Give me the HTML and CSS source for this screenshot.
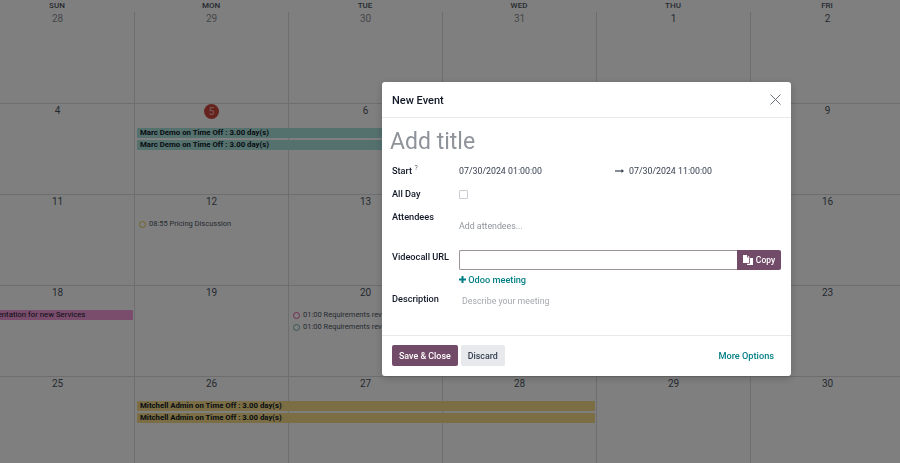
FILE: index.html
```html
<!DOCTYPE html>
<html lang="en">
<head>
<meta charset="UTF-8" />
<title>New Event</title>
<link rel="stylesheet" href="styles.css">
</head>
<body>
  <div class="calendar">
    <div class="week-head">
      <div>SUN</div><div>MON</div><div>TUE</div><div>WED</div><div>THU</div><div>FRI</div>
    </div>

    <div class="week first">
      <div class="day muted">28</div><div class="day muted">29</div><div class="day muted">30</div><div class="day muted">31</div><div class="day">1</div><div class="day">2</div>
    </div>

    <div class="week">
      <div class="day">4</div><div class="day"><span class="today">5</span></div><div class="day">6</div><div class="day">7</div><div class="day">8</div><div class="day">9</div>
      <div class="bar teal row-a span-mon-wed">Marc Demo on Time Off : 3.00 day(s)</div>
      <div class="bar teal row-b span-mon-wed">Marc Demo on Time Off : 3.00 day(s)</div>
    </div>

    <div class="week">
      <div class="day">11</div><div class="day">12</div><div class="day">13</div><div class="day">14</div><div class="day">15</div><div class="day">16</div>
      <div class="timed row-a col-mon"><i class="dot yellow"></i>08:55 Pricing Discussion</div>
    </div>

    <div class="week">
      <div class="day">18</div><div class="day">19</div><div class="day">20</div><div class="day">21</div><div class="day">22</div><div class="day">23</div>
      <div class="bar pink row-a col-sun"><span class="clipped">Presentation for new Services</span></div>
      <div class="timed row-a col-tue"><i class="dot pink-dot"></i>01:00 Requirements review</div>
      <div class="timed row-b col-tue"><i class="dot teal-dot"></i>01:00 Requirements review</div>
    </div>

    <div class="week">
      <div class="day">25</div><div class="day">26</div><div class="day">27</div><div class="day">28</div><div class="day">29</div><div class="day">30</div>
      <div class="bar yellow-bar row-a span-mon-wed">Mitchell Admin on Time Off : 3.00 day(s)</div>
      <div class="bar yellow-bar row-b span-mon-wed">Mitchell Admin on Time Off : 3.00 day(s)</div>
    </div>
  </div>

  <div class="backdrop"></div>

  <div class="modal">
    <header class="modal-header">
      <h4>New Event</h4>
      <svg class="close" width="11" height="11" viewBox="0 0 11 11"><path d="M.5 .5l10 10M10.500 .5l-10 10" stroke="#6b6f76" stroke-width="1" fill="none"/></svg>
    </header>

    <div class="modal-body">
      <div class="title">Add title</div>

      <div class="field start-row">
        <label>Start <sup>?</sup></label>
        <div class="dates">
          <span class="date">07/30/2024 01:00:00</span>
          <svg class="arrow" width="9" height="6" viewBox="0 0 9 6"><path d="M0 3h7.500" stroke="#374151" stroke-width="1.200"/><path d="M6.500 1l2.500 2-2.500 2z" fill="#374151"/></svg>
          <span>07/30/2024 11:00:00</span>
        </div>
      </div>

      <div class="field allday-row">
        <label>All Day</label>
        <span class="checkbox"></span>
      </div>

      <div class="field attendees-row">
        <label>Attendees</label>
        <span class="placeholder">Add attendees...</span>
      </div>

      <div class="field video-row">
        <label>Videocall URL</label>
        <div class="url-group">
          <div class="url-input"></div>
          <button class="copy">
            <svg width="10" height="10" viewBox="0 0 10 10"><path d="M0 0h4v2.500h2V8H0z" fill="#fff"/><path d="M4.800 .4L7 2.400H4.800z" fill="#fff"/><path d="M6.800 3H10v7H4V8.800h2.800z" fill="#fff"/></svg>
            Copy
          </button>
        </div>
      </div>

      <div class="field meeting-row">
        <span></span>
        <a class="link"><svg width="7" height="7" viewBox="0 0 7 7"><path d="M3.500 0v7M0 3.500h7" stroke="#017e84" stroke-width="2"/></svg> Odoo meeting</a>
      </div>

      <div class="field desc-row">
        <label>Description</label>
        <span class="placeholder desc">Describe your meeting</span>
      </div>
    </div>

    <footer class="modal-footer">
      <button class="btn primary">Save &amp; Close</button>
      <button class="btn secondary">Discard</button>
      <a class="link more">More Options</a>
    </footer>
  </div>
</body>
</html>
```

FILE: styles.css
```css
* {
  box-sizing: border-box;
}

html, body {
  height: 100%;
}

body {
  margin: 0;
  overflow: hidden;
  background: #fff;
  color: #374151;
  font-family: Roboto, "Noto Sans", sans-serif;
  font-size: 8.800px;
}

/* Calendar behind the dialog */
.calendar {
  width: 924px;
  margin-left: -20px;
}

.week-head,
.week {
  display: grid;
  grid-template-columns: repeat(6, 154px);
}

.week-head {
  height: 12px;
  font-size: 8px;
  font-weight: 500;
  line-height: 12px;
  text-align: center;
  color: #4b5563;
}

.week {
  grid-template-rows: 24px 12px 12px 1fr;
  height: 91px;
  border-bottom: 1px solid #dcdcdc;
}

.week.first {
  height: 92px;
}

.day {
  grid-row: 1 / -1;
  border-left: 1px solid #dcdcdc;
  font-size: 10px;
  line-height: 14px;
  text-align: center;
  color: #4b5563;
}

.week .day:nth-child(1) { grid-column: 1; }
.week .day:nth-child(2) { grid-column: 2; }
.week .day:nth-child(3) { grid-column: 3; }
.week .day:nth-child(4) { grid-column: 4; }
.week .day:nth-child(5) { grid-column: 5; }
.week .day:nth-child(6) { grid-column: 6; }

.day.muted {
  color: #8b8f96;
}

.today {
  display: inline-block;
  width: 15px;
  height: 15px;
  border-radius: 50%;
  background: #cc463d;
  color: #f0b9b5;
  line-height: 15px;
}

.bar {
  overflow: hidden;
  height: 10px;
  margin: 0 2px 0 3px;
  padding-left: 3px;
  border-radius: 1px;
  color: #111827;
  font-size: 7.800px;
  font-weight: 700;
  line-height: 10px;
  white-space: nowrap;
}

.row-a { grid-row: 2; }
.row-b { grid-row: 3; }
.col-sun { grid-column: 1; }
.col-mon { grid-column: 2; }
.col-tue { grid-column: 3; }
.span-mon-wed { grid-column: 2 / 5; margin-right: 1px; }

.teal { background: #a9e2dd; }
.yellow-bar { background: #f6dc88; }

.pink {
  margin-left: 0;
  margin-right: 1px;
  padding-left: 0;
  background: #f59ad8;
  font-weight: 400;
}

.clipped {
  margin-left: 2px;
}

.timed {
  overflow: hidden;
  display: flex;
  align-items: center;
  gap: 3px;
  margin: -1px 1px 1px 5px;
  font-size: 7.500px;
  line-height: 12px;
  white-space: nowrap;
  color: #4b5563;
}

.dot {
  flex: none;
  width: 7px;
  height: 7px;
  border: 1px solid #999;
  border-radius: 50%;
}

.yellow { border-color: #e6c84a; }
.pink-dot { border-color: #e0569f; }
.teal-dot { border-color: #66b0ae; }

.backdrop {
  position: fixed;
  inset: 0;
  background: rgba(0, 0, 0, 0.5);
}

/* Dialog */
.modal {
  position: fixed;
  left: 382px;
  top: 82px;
  display: flex;
  flex-direction: column;
  width: 409px;
  height: 294px;
  border-radius: 3px;
  background: #fff;
  box-shadow: 0 2px 8px rgba(0, 0, 0, 0.2);
}

.modal-header {
  display: flex;
  align-items: center;
  justify-content: space-between;
  flex: none;
  height: 36px;
  padding: 0 10px;
  border-bottom: 1px solid #e7e9ed;
}

.modal-header h4 {
  margin: 0;
  padding-top: 1px;
  color: #111827;
  font-size: 11px;
  font-weight: 500;
}

.modal-body {
  flex: 1;
  padding: 0 10px;
}

.title {
  height: 46px;
  margin-left: -2px;
  padding-top: 9px;
  color: #8f939a;
  font-size: 23px;
  line-height: 30px;
}

.field {
  display: grid;
  grid-template-columns: 67px 1fr;
}

.field label {
  color: #111827;
  font-size: 9.200px;
  font-weight: 500;
  line-height: 14px;
}

.field sup {
  font-size: 7px;
  font-weight: 400;
  line-height: 0;
  color: #5f636a;
}

.dates {
  display: flex;
  align-items: center;
  height: 14px;
  line-height: 14px;
}

.date {
  width: 156px;
}

.arrow {
  margin-right: 5px;
}

.start-row { height: 23px; }
.allday-row { height: 23px; }
.attendees-row { height: 40px; }
.video-row { height: 23px; }
.meeting-row { height: 19px; }

.checkbox {
  width: 9px;
  height: 9px;
  margin-top: 3px;
  border: 1px solid #c9ccd2;
  border-radius: 1px;
}

.placeholder {
  color: #8f939a;
  line-height: 14px;
}

.attendees-row .placeholder {
  padding-top: 9px;
}

.desc {
  padding: 1px 0 0 3px;
  color: #a5a8ae;
  line-height: 16px;
}

.url-group {
  display: flex;
  height: 20px;
  width: 322px;
}

.url-input {
  flex: 1;
  border: 1px solid #9a949a;
  border-right: 0;
  border-radius: 2px 0 0 2px;
}

.copy {
  display: flex;
  align-items: center;
  justify-content: center;
  gap: 3px;
  width: 44px;
  padding: 0;
  border: 0;
  border-radius: 0 2px 2px 0;
  background: #714b67;
  color: #fff;
  font: 500 8.500px Roboto, sans-serif;
}

.link {
  color: #017e84;
  font-size: 9.200px;
  font-weight: 500;
}

.meeting-row .link {
  line-height: 14px;
}

.modal-footer {
  display: flex;
  align-items: center;
  gap: 3px;
  flex: none;
  height: 41px;
  padding: 0 17px 1px 10px;
  border-top: 1px solid #e7e9ed;
}

.btn {
  height: 21px;
  padding: 0 7px;
  border: 0;
  border-radius: 2px;
  font: 500 8.900px Roboto, sans-serif;
}

.primary {
  background: #714b67;
  color: #fff;
}

.secondary {
  background: #e7e9ed;
  color: #374151;
}

.more {
  margin-left: auto;
}
```
